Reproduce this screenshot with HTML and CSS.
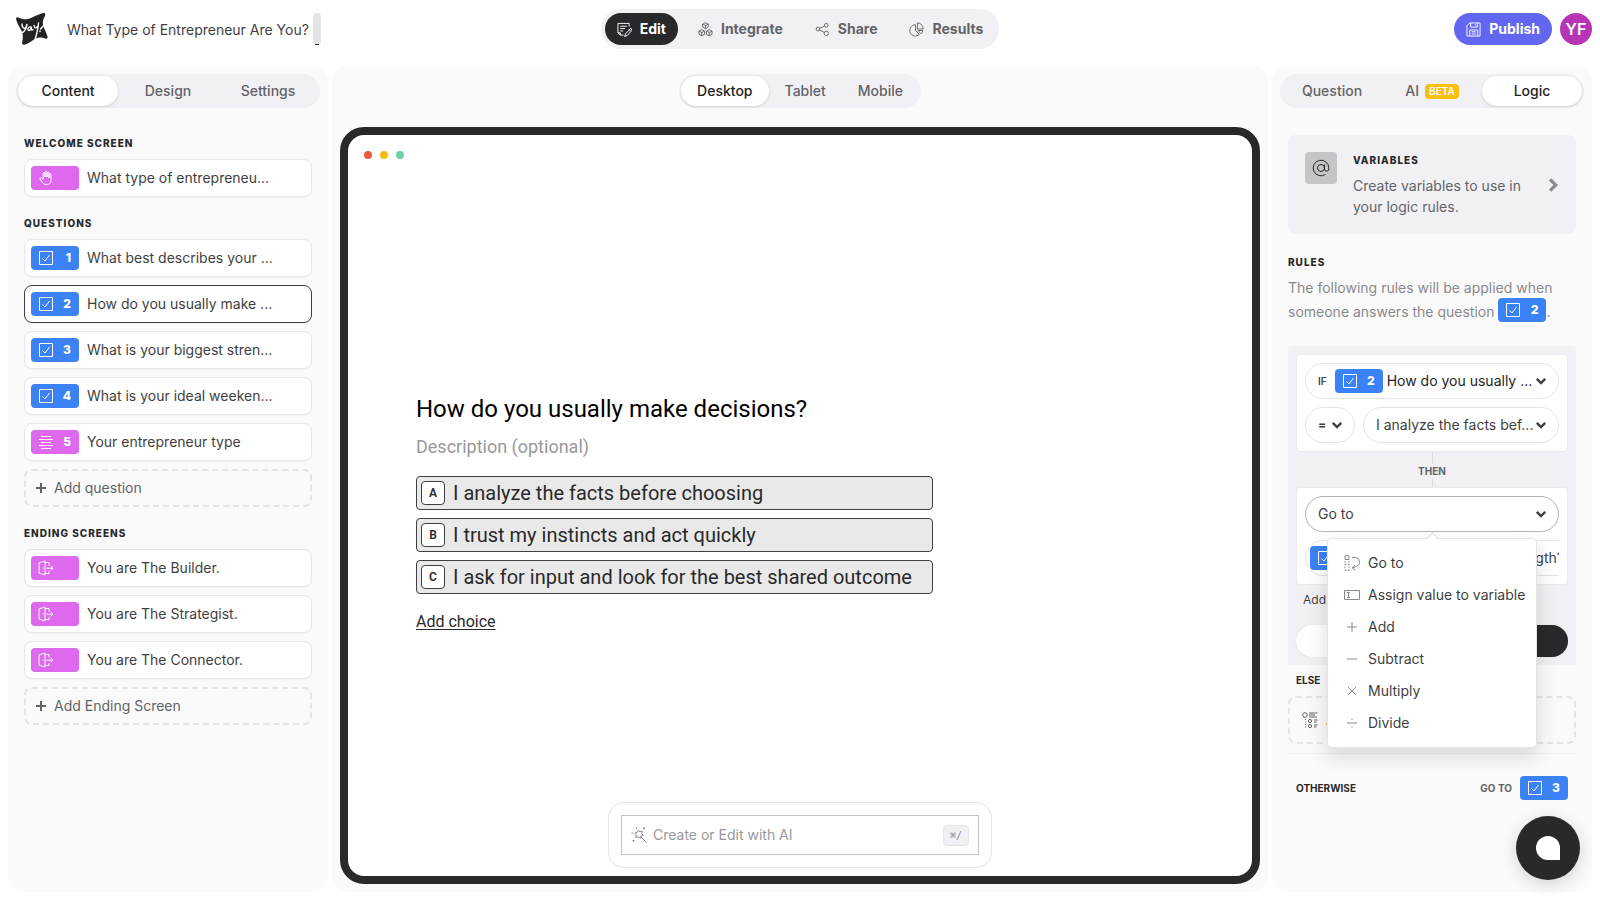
FILE: index.html
```html
<!DOCTYPE html>
<html lang="en">
<head>
    <meta charset="UTF-8">
    <meta name="viewport" content="width=device-width, initial-scale=1.0">
    <title>What Type of Entrepreneur Are You?</title>
    <link rel="stylesheet" href="styles.css">
</head>
<body>
    <svg class="sprite" aria-hidden="true">
        <symbol id="check" viewBox="0 0 16 16"><path d="M1.500 1.500h13v13h-13zM4.500 8.500l2.500 2.500 4.500-6"/></symbol>
        <symbol id="lines" viewBox="0 0 16 16"><path d="M3 2.500h10M1 5.500h14M3 8.500h10M1 11.500h14M3 14.500h10"/></symbol>
        <symbol id="hand" viewBox="0 0 16 16"><path d="M5 9V3.500a1 1 0 0 1 2 0V7M7 7V2.500a1 1 0 0 1 2 0V7M9 7V3a1 1 0 0 1 2 0v5M11 8V4.500a1 1 0 0 1 2 0V10c0 3-1.500 4.500-4.500 4.500-2.500 0-3.500-1-4.500-2.500L2 9c-.5-1 .8-1.800 1.600-1L5 9.500"/></symbol>
        <symbol id="door" viewBox="0 0 16 16"><path d="M1 3l6-2v14l-6-2zM5 7.500v1M7 2.500h4v3M11 11v2.500H7M8.500 8.200H15M12.800 6l2.200 2.200-2.200 2.200"/></symbol>
        <symbol id="edit" viewBox="0 0 16 16"><path d="M13 5V1.500H1v10l2.500 2.500H7M3.500 4.500h7M3.500 7h5M3.500 9.500h3M1 11.500h2.500V14M14.800 6.500l-5.600 6-1.200 3 3-1.200 4.800-5.400zM13 8.300l1.500 1.500"/></symbol>
        <symbol id="cubes" viewBox="0 0 16 16"><path d="M8 .8l3 1.500v3.200L8 7.200 5 5.500V2.300zM5 2.300l3 1.500 3-1.500M8 3.800v3.400M4 8.200l3 1.500v3.400l-3 1.600-3-1.600V9.700zM1 9.700l3 1.500 3-1.500M4 11.200v3.500M12 8.200l3 1.500v3.400l-3 1.600-3-1.600V9.700zM9 9.700l3 1.500 3-1.500M12 11.200v3.500"/></symbol>
        <symbol id="share" viewBox="0 0 16 16"><circle cx="3.200" cy="7.500" r="2"/><circle cx="12" cy="3.500" r="2"/><circle cx="12" cy="12.200" r="2.300"/><path d="M5 6.700l5.200-2.400M5 8.500l5 2.700"/></symbol>
        <symbol id="pie" viewBox="0 0 16 16"><path d="M7 3a6 6 0 1 0 4 10.300L7 9zM9 1v6.500h6A6 6 0 0 0 9 1zM9.500 9h5.300a6 6 0 0 1-1.800 3.600z"/></symbol>
        <symbol id="save" viewBox="0 0 16 16"><path d="M4 1h11v14H1V4zM5 1v4.500h7V1M10 2.500v1.500M4 15V8.500h8.500V15M6 10.500h4.500M6 12.700h4.500"/></symbol>
        <symbol id="at" viewBox="0 0 18 18"><circle cx="9" cy="9" r="3.500"/><path d="M12.500 5.500V10a2 2 0 0 0 4.300 0V9a7.800 7.800 0 1 0-3.300 6.400"/></symbol>
        <symbol id="plus" viewBox="0 0 10 10"><path d="M5 0v10M0 5h10"/></symbol>
        <symbol id="minus" viewBox="0 0 10 10"><path d="M0 5h10"/></symbol>
        <symbol id="times" viewBox="0 0 10 10"><path d="M1 1l8 8M9 1L1 9"/></symbol>
        <symbol id="divide" viewBox="0 0 10 10"><path d="M0 5h10M5 .5v1.500M5 8v1.500"/></symbol>
        <symbol id="chevron" viewBox="0 0 10 10"><path d="M1.500 3.200L5 6.700l3.500-3.500"/></symbol>
        <symbol id="wand" viewBox="0 0 16 16"><path d="M7.500 3.200l1.200 1.600 2.500-.6-.5 2.400 1.600 1.800-2.400.6-.6 2.300-1.900-1.500-2.600.8.5-2.600-1.600-1.800 2.400-.6zM10 10l5.500 5.500M5.500.5v1.500M13 .3v2M12 1.300h2M.5 6H2M2.500 12.700v2M1.500 13.700h2"/></symbol>
        <symbol id="goto" viewBox="0 0 16 16"><path d="M1 .8h4v3.700H1zM8 2.500h3.500a4.500 4.500 0 0 1 1 8.800L8.500 13M11 10l-2.700 3 3 2"/><path stroke-dasharray="1.500 1.300" d="M1 6v9.500M5 6v9.500M1 9.200h4M1 15.300h4"/></symbol>
        <symbol id="assign" viewBox="0 0 16 16"><path d="M.5 3.500h15v9H.5zM3 5.500h3M3 10.500h3M4.500 5.500v5"/></symbol>
        <symbol id="branch" viewBox="0 0 16 16"><circle cx="3" cy="3" r="2.300"/><path d="M7 1h8.500M7 3h6M7 5h8M12 8h3.500M12 10h2.500M12 13h3.500M12 15h2.500M3.500 7v1M3.500 9.500v1M3.500 12v1M3.500 14.500v1"/><circle cx="8" cy="9" r="1.600"/><circle cx="8" cy="14" r="1.600"/></symbol>
    </svg>

    <header class="topbar">
        <div class="brand">
            <a href="#" class="logo" aria-label="Home">
                <svg viewBox="0 0 32 32">
                    <path class="logo-star" d="M2 4.500c4.500 2 9 2.600 13 .6C19 3.300 23 1 27.500.1c1.600-.2 2.200 1 1.500 2.600-2.600 4.500-2.800 8.300-1 12.300 1.400 3 3 6.500 3.600 9 .2 1.600-1 2-2.400 1.400-3.800-1.600-7.300-1.300-10.800.8-3.500 2.100-6.400 4.700-9.900 5.500-1.700.3-2.700-.6-2.300-2.400 1-4.500.9-8.300-.8-11.800C4 14.500 1.500 11 .3 7-.2 5 .6 4 2 4.500z"/>
                    <path class="logo-ink" d="M6 11c0 4 2 5 4 3.500L11 11c-.5 4-1.500 7-4.500 8.500M15 14c-3-.8-4 3-2 3.500 1.500 0 2-2 2.500-3.500-.5 2 0 4 1.500 2.500M18 12.500c.5 3 2 3 3.500 1M22.500 10c0 4-1 8-3.500 17M31 9l-6.500 7M24 18v.5"/>
                </svg>
            </a>
            <input class="form-name" type="text" value="What Type of Entrepreneur Are You?" aria-label="Form name">
            <span class="form-handle"></span>
        </div>
        <nav class="main-nav">
            <a href="#" class="active"><svg class="icon"><use href="#edit"/></svg>Edit</a>
            <a href="#"><svg class="icon"><use href="#cubes"/></svg>Integrate</a>
            <a href="#"><svg class="icon"><use href="#share"/></svg>Share</a>
            <a href="#"><svg class="icon"><use href="#pie"/></svg>Results</a>
        </nav>
        <div class="account">
            <button type="button" class="publish"><svg class="icon"><use href="#save"/></svg>Publish</button>
            <button type="button" class="avatar">YF</button>
        </div>
    </header>

    <div class="workspace">
        <aside class="panel">
            <div class="tabs">
                <button type="button" class="active">Content</button>
                <button type="button">Design</button>
                <button type="button">Settings</button>
            </div>
            <div class="panel-body">
                <section class="group">
                    <h2>Welcome screen</h2>
                    <a href="#" class="card"><span class="chip pink"><svg class="icon"><use href="#hand"/></svg></span><span>What type of entrepreneu...</span></a>
                </section>
                <section class="group">
                    <h2>Questions</h2>
                    <a href="#" class="card"><span class="chip"><svg class="icon"><use href="#check"/></svg>1</span><span>What best describes your ...</span></a>
                    <a href="#" class="card selected"><span class="chip"><svg class="icon"><use href="#check"/></svg>2</span><span>How do you usually make ...</span></a>
                    <a href="#" class="card"><span class="chip"><svg class="icon"><use href="#check"/></svg>3</span><span>What is your biggest stren...</span></a>
                    <a href="#" class="card"><span class="chip"><svg class="icon"><use href="#check"/></svg>4</span><span>What is your ideal weeken...</span></a>
                    <a href="#" class="card"><span class="chip pink"><svg class="icon"><use href="#lines"/></svg>5</span><span>Your entrepreneur type</span></a>
                    <button type="button" class="add"><svg class="icon"><use href="#plus"/></svg>Add question</button>
                </section>
                <section class="group">
                    <h2>Ending screens</h2>
                    <a href="#" class="card"><span class="chip pink"><svg class="icon"><use href="#door"/></svg></span><span>You are The Builder.</span></a>
                    <a href="#" class="card"><span class="chip pink"><svg class="icon"><use href="#door"/></svg></span><span>You are The Strategist.</span></a>
                    <a href="#" class="card"><span class="chip pink"><svg class="icon"><use href="#door"/></svg></span><span>You are The Connector.</span></a>
                    <button type="button" class="add"><svg class="icon"><use href="#plus"/></svg>Add Ending Screen</button>
                </section>
            </div>
        </aside>

        <main class="panel preview">
            <div class="tabs devices">
                <button type="button" class="active">Desktop</button>
                <button type="button">Tablet</button>
                <button type="button">Mobile</button>
            </div>
            <div class="browser">
                <div class="dots"><span class="dot red"></span><span class="dot yellow"></span><span class="dot green"></span></div>
                <div class="stage">
                    <div class="question">
                        <h1>How do you usually make decisions?</h1>
                        <input class="description" type="text" placeholder="Description (optional)" aria-label="Description">
                        <ul class="choices">
                            <li><kbd>A</kbd>I analyze the facts before choosing</li>
                            <li><kbd>B</kbd>I trust my instincts and act quickly</li>
                            <li><kbd>C</kbd>I ask for input and look for the best shared outcome</li>
                        </ul>
                        <a href="#" class="add-choice">Add choice</a>
                    </div>
                </div>
                <div class="ai-bar">
                    <label class="ai-field">
                        <svg class="icon"><use href="#wand"/></svg>
                        <input type="text" placeholder="Create or Edit with AI" aria-label="Create or Edit with AI">
                        <kbd>⌘/</kbd>
                    </label>
                </div>
            </div>
        </main>

        <aside class="panel">
            <div class="tabs">
                <button type="button">Question</button>
                <button type="button">AI<span class="beta">BETA</span></button>
                <button type="button" class="active">Logic</button>
            </div>
            <div class="panel-body logic">
                <a href="#" class="variables">
                    <span class="variables-icon"><svg class="icon"><use href="#at"/></svg></span>
                    <span class="variables-text">
                        <strong>Variables</strong>
                        <span>Create variables to use in your logic rules.</span>
                    </span>
                    <svg class="icon variables-arrow"><use href="#chevron"/></svg>
                </a>
                <h2>Rules</h2>
                <p class="intro">The following rules will be applied when someone answers the question <span class="chip"><svg class="icon"><use href="#check"/></svg>2</span>.</p>

                <div class="rule">
                    <div class="rule-card">
                        <label class="pill">
                            <span class="if">IF</span>
                            <span class="chip"><svg class="icon"><use href="#check"/></svg>2</span>
                            <select class="dark" aria-label="Question"><option>How do you usually ...</option></select>
                            <svg class="icon arrow"><use href="#chevron"/></svg>
                        </label>
                        <div class="pill-row">
                            <label class="pill operator">
                                <select aria-label="Operator"><option>=</option></select>
                                <svg class="icon arrow"><use href="#chevron"/></svg>
                            </label>
                            <label class="pill">
                                <select aria-label="Answer"><option>I analyze the facts bef...</option></select>
                                <svg class="icon arrow"><use href="#chevron"/></svg>
                            </label>
                        </div>
                    </div>
                    <div class="then"><span>THEN</span></div>
                    <div class="rule-card">
                        <div class="action">
                            <button type="button" class="pill open" aria-expanded="true">Go to<svg class="icon arrow"><use href="#chevron"/></svg></button>
                            <div class="menu" role="menu">
                                <button type="button" role="menuitem"><svg class="icon"><use href="#goto"/></svg>Go to</button>
                                <button type="button" role="menuitem"><svg class="icon"><use href="#assign"/></svg>Assign value to variable</button>
                                <button type="button" role="menuitem"><svg class="icon small"><use href="#plus"/></svg>Add</button>
                                <button type="button" role="menuitem"><svg class="icon small"><use href="#minus"/></svg>Subtract</button>
                                <button type="button" role="menuitem"><svg class="icon small"><use href="#times"/></svg>Multiply</button>
                                <button type="button" role="menuitem"><svg class="icon small"><use href="#divide"/></svg>Divide</button>
                            </div>
                        </div>
                        <div class="target-clip">
                            <button type="button" class="pill target"><span class="chip"><svg class="icon"><use href="#check"/></svg>3</span>What is your biggest strength?</button>
                        </div>
                    </div>
                    <a href="#" class="add-action">Add</a>
                    <div class="rule-buttons">
                        <button type="button" class="cancel" aria-label="Cancel"></button>
                        <button type="button" class="confirm" aria-label="Save"></button>
                    </div>
                </div>

                <h3>ELSE</h3>
                <button type="button" class="add else"><svg class="icon"><use href="#branch"/></svg>Add</button>
                <hr>
                <div class="otherwise">
                    <h3>OTHERWISE</h3>
                    <span class="goto">GO TO</span>
                    <span class="chip"><svg class="icon"><use href="#check"/></svg>3</span>
                </div>
            </div>
        </aside>
    </div>

    <button type="button" class="chat" aria-label="Chat"><span></span></button>
</body>
</html>
```

FILE: styles.css
```css
* {
    box-sizing: border-box;
}
body {
    margin: 0;
    min-height: 100vh;
    display: flex;
    flex-direction: column;
    background: #fff;
    color: #3f3f42;
    font-family: Inter, "Liberation Sans", sans-serif;
    font-size: 14px;
    line-height: 20px;
}
button, input, select {
    font: inherit;
    color: inherit;
    border: 0;
    padding: 0;
    background: none;
    outline: 0;
}
a {
    color: inherit;
    text-decoration: none;
}
h1, h2, h3, p, ul {
    margin: 0;
    padding: 0;
}
.sprite {
    display: none;
}
.icon {
    width: 16px;
    height: 16px;
    flex: none;
    fill: none;
    stroke: currentColor;
    stroke-width: 1;
}

/* top bar */
.topbar {
    display: grid;
    grid-template-columns: 1fr auto 1fr;
    align-items: center;
    height: 58px;
    margin-bottom: 8px;
    padding: 0 8px;
}
.brand {
    display: flex;
    align-items: center;
    padding-left: 8px;
}
.logo, .logo svg {
    display: block;
    width: 32px;
    height: 32px;
}
.logo-star {
    fill: #232325;
}
.logo-ink {
    fill: none;
    stroke: #fff;
    stroke-width: 1.4;
    stroke-linecap: round;
}
.form-name {
    width: 246px;
    margin-left: 19px;
    height: 32px;
}
.form-handle {
    display: flex;
    align-items: flex-end;
    justify-content: center;
    width: 8px;
    height: 32px;
    border-radius: 4px;
    background: #e4e4e7;
}
.form-handle::after {
    content: "";
    width: 4px;
    height: 1px;
    background: #29292b;
}
.main-nav {
    display: flex;
    gap: 8px;
    padding: 4px;
    border-radius: 20px;
    background: #f1f1f5;
    font-weight: 700;
    color: #636367;
}
.main-nav a {
    display: flex;
    align-items: center;
    gap: 8px;
    height: 32px;
    padding: 0 12px;
    border-radius: 16px;
}
.main-nav .icon, .publish .icon {
    width: 15px;
    height: 15px;
}
.main-nav .active {
    background: #29292b;
    color: #fff;
}
.account {
    display: flex;
    justify-content: flex-end;
    gap: 8px;
}
.publish, .avatar {
    height: 32px;
    border-radius: 16px;
    color: #fff;
}
.publish {
    display: flex;
    align-items: center;
    gap: 8px;
    padding: 0 12px;
    background: #6366f1;
    font-weight: 700;
}
.avatar {
    width: 32px;
    background: #b735b5;
    font-size: 16px;
    font-weight: 600;
}

/* columns */
.workspace {
    flex: 1;
    display: grid;
    grid-template-columns: 320px 1fr 320px;
    gap: 4px;
    padding: 0 8px 8px;
}
.panel {
    padding: 8px;
    border-radius: 16px;
    background: #fafafa;
}
.panel-body {
    padding: 27px 8px 0;
}
.tabs {
    display: grid;
    grid-template-columns: repeat(3, 1fr);
    padding: 2px;
    border-radius: 17px;
    background: #f1f1f5;
    font-weight: 500;
    color: #636367;
}
.tabs button {
    display: flex;
    align-items: center;
    justify-content: center;
    height: 30px;
    border-radius: 15px;
}
.tabs .active {
    background: #fff;
    color: #232325;
    box-shadow: 0 1px 3px rgba(0, 0, 0, 0.15);
}
.beta {
    margin-left: 6px;
    padding: 0 4px;
    border-radius: 4px;
    background: #fbbf0c;
    color: #fff;
    font-size: 10px;
    line-height: 15px;
    font-weight: 600;
}
h2, h3, .variables strong {
    color: #29292b;
    font-size: 10px;
    line-height: 16px;
    font-weight: 700;
}
h2, .variables strong {
    font-weight: 800;
    letter-spacing: 1px;
    text-transform: uppercase;
}

/* question list */
.group {
    display: flex;
    flex-direction: column;
    gap: 8px;
    margin-bottom: 18px;
}
.card {
    display: flex;
    align-items: center;
    gap: 8px;
    height: 38px;
    padding: 0 6px;
    border: 1px solid #e7e7ea;
    border-radius: 8px;
    background: #fff;
    box-shadow: 0 1px 2px rgba(0, 0, 0, 0.04);
    white-space: nowrap;
}
.card.selected {
    border-color: #3f3f42;
}
.chip {
    display: inline-flex;
    align-items: center;
    justify-content: space-between;
    flex: none;
    width: 48px;
    height: 24px;
    padding: 0 8px 0 7px;
    border-radius: 4px;
    background: #3b82f6;
    color: #fff;
    font-size: 12px;
    font-weight: 800;
}
.chip.pink {
    background: #de69ee;
}
.add {
    display: flex;
    align-items: center;
    gap: 8px;
    height: 38px;
    padding: 0 10px;
    border: 2px dashed #e4e4e7;
    border-radius: 8px;
    color: #636367;
}
.add .icon {
    width: 10px;
    height: 10px;
    stroke-width: 2;
}

/* preview */
.preview {
    display: flex;
    flex-direction: column;
    align-items: center;
}
.devices {
    display: flex;
}
.devices button {
    padding: 0 16px;
}
.browser {
    position: relative;
    flex: 1;
    align-self: stretch;
    display: flex;
    flex-direction: column;
    margin-top: 19px;
    border: 8px solid #29292b;
    border-radius: 24px;
    background: #fff;
}
.dots {
    display: flex;
    gap: 8px;
    padding: 16px;
}
.dot {
    width: 8px;
    height: 8px;
    border-radius: 50%;
}
.red {
    background: #ee583f;
}
.yellow {
    background: #f8bd08;
}
.green {
    background: #6cd2a2;
}
.stage {
    flex: 1;
    display: flex;
    align-items: center;
    padding: 0 68px 25px;
}
.question {
    flex: 0 1 517px;
    font-family: Roboto, "Liberation Sans", sans-serif;
    color: #29292b;
}
.question h1 {
    color: #000;
    font-size: 24px;
    line-height: 32px;
    font-weight: 400;
}
.description {
    display: block;
    width: 100%;
    height: 24px;
    margin: 10px 0 17px;
    font-size: 18px;
}
.description::placeholder, .ai-field input::placeholder {
    color: #98989b;
    opacity: 1;
}
.choices {
    display: grid;
    gap: 8px;
    list-style: none;
}
.choices li {
    display: flex;
    align-items: center;
    gap: 8px;
    height: 34px;
    padding: 0 4px;
    border: 1px solid #3f3f42;
    border-radius: 4px;
    background: #e9e9e9;
    font-size: 20px;
}
.choices kbd {
    width: 24px;
    border: 1px solid #3f3f42;
    border-radius: 4px;
    background: #fff;
    font: 600 12px/22px Roboto, sans-serif;
    text-align: center;
}
.add-choice {
    display: inline-block;
    margin-top: 16px;
    font-size: 16px;
    line-height: 24px;
    text-decoration: underline;
    text-underline-offset: 2px;
}
.ai-bar {
    position: absolute;
    left: 50%;
    bottom: 8px;
    width: 384px;
    transform: translateX(-50%);
    padding: 12px;
    border: 1px solid #e4e4e7;
    border-radius: 16px;
    background: #fff;
}
.ai-field {
    display: flex;
    align-items: center;
    gap: 6px;
    height: 40px;
    padding: 0 9px;
    border: 1px solid #c4c4c7;
    color: #8a8a8e;
}
.ai-field input {
    flex: 1;
    min-width: 0;
}
.ai-field kbd {
    width: 26px;
    border: 1px solid #e4e4e7;
    border-radius: 4px;
    background: #f1f1f5;
    font: 10px/19px "DejaVu Sans Mono", monospace;
    text-align: center;
}

/* logic */
.variables {
    display: flex;
    gap: 16px;
    margin-bottom: 20px;
    padding: 17px;
    border-radius: 8px;
    background: #f1f1f5;
    color: #636367;
}
.variables-icon {
    display: flex;
    align-items: center;
    justify-content: center;
    flex: none;
    width: 32px;
    height: 32px;
    border-radius: 4px;
    background: #c4c4c9;
    color: #29292b;
}
.variables-icon .icon {
    width: 18px;
    height: 18px;
}
.variables-text {
    flex: 1;
    display: grid;
    gap: 7px;
    line-height: 21px;
}
.variables-arrow {
    align-self: center;
    margin-right: -2px;
    transform: rotate(-90deg);
    stroke-width: 2;
    color: #8a8a8e;
}
.intro {
    margin: 6px 0 22px;
    color: #8a8a8e;
    line-height: 24px;
}
.intro .chip {
    vertical-align: middle;
    margin-top: -6px;
}
.rule {
    padding: 8px;
    border-radius: 4px;
    background: #f1f1f5;
}
.rule-card {
    display: grid;
    grid-template-columns: minmax(0, 1fr);
    gap: 8px;
    padding: 8px;
    border: 1px solid #ebebee;
    border-radius: 4px;
    background: #fff;
}
.pill-row {
    display: flex;
    gap: 8px;
}
.pill {
    display: flex;
    align-items: center;
    flex: 1;
    min-width: 0;
    height: 36px;
    padding: 0 11px 0 12px;
    border: 1px solid #e4e4e7;
    border-radius: 18px;
    background: #fff;
}
.pill select {
    flex: 1;
    min-width: 0;
    appearance: none;
    white-space: nowrap;
}
.pill .dark {
    color: #232325;
}
.pill .if {
    margin-right: 8px;
    font-size: 10px;
    font-weight: 600;
}
.pill .chip {
    margin-right: 4px;
}
.pill .arrow {
    width: 12px;
    height: 12px;
    stroke-width: 2;
}
.pill.operator {
    flex: 0 0 50px;
    font-size: 12px;
    font-weight: 700;
}
.pill.open {
    width: 100%;
    justify-content: space-between;
    border-color: #b4b4b8;
}
.then {
    display: flex;
    flex-direction: column;
    align-items: center;
    color: #636367;
    font-size: 10px;
    line-height: 12px;
    font-weight: 700;
}
.then::before, .then::after {
    content: "";
    width: 1px;
    height: 12px;
    background: #dcdce0;
}
.then::after {
    height: 9px;
}
.then span {
    padding: 1px 0;
}
.action {
    position: relative;
}
.menu {
    position: absolute;
    z-index: 2;
    top: 42px;
    left: 50%;
    width: 210px;
    transform: translateX(-50%);
    padding: 8px 0;
    border: 1px solid #e4e4e7;
    border-radius: 4px;
    background: #fff;
    box-shadow: 0 8px 20px rgba(0, 0, 0, 0.14);
}
.menu::before {
    content: "";
    position: absolute;
    top: -5px;
    left: 50%;
    width: 8px;
    height: 8px;
    margin-left: -4px;
    transform: rotate(45deg);
    border: 1px solid #dcdce0;
    border-right: 0;
    border-bottom: 0;
    background: #fff;
}
.menu button {
    display: flex;
    align-items: center;
    gap: 8px;
    width: 100%;
    height: 32px;
    padding-left: 16px;
    white-space: nowrap;
}
.menu .icon {
    color: #8a8a8e;
}
.menu .small {
    width: 10px;
    height: 10px;
    margin: 0 3px;
}
.target-clip {
    overflow: hidden;
}
.target {
    width: 272px;
    padding: 0 4px;
    white-space: nowrap;
}
.add-action {
    display: block;
    padding: 5px 7px 15px;
    font-size: 12px;
}
.rule-buttons {
    display: grid;
    grid-template-columns: 1fr 1fr;
    gap: 8px;
}
.rule-buttons button {
    height: 32px;
    border-radius: 16px;
    background: #fff;
    box-shadow: 0 0 1px #c4c4c7;
}
.rule-buttons .confirm {
    background: #29292b;
}
.logic h3 {
    margin: 7px 8px 8px;
}
.else {
    width: 100%;
    height: 48px;
    padding: 0 12px;
}
.add.else .icon {
    width: 16px;
    height: 16px;
    stroke-width: 1;
}
hr {
    margin: 9px 0 22px;
    border: 0;
    border-top: 1px solid #efeff2;
}
.otherwise {
    display: flex;
    align-items: center;
    gap: 8px;
    padding: 0 8px;
}
.logic .otherwise h3 {
    flex: 1;
    margin: 0;
}
.goto {
    color: #636367;
    font-size: 10px;
    font-weight: 700;
}

/* chat launcher floats over the page */
.chat {
    position: fixed;
    right: 20px;
    bottom: 20px;
    display: flex;
    align-items: center;
    justify-content: center;
    width: 64px;
    height: 64px;
    border-radius: 50%;
    background: #29292b;
    box-shadow: 0 4px 16px rgba(0, 0, 0, 0.16);
}
.chat span {
    width: 24px;
    height: 24px;
    border-radius: 12px 12px 0 12px;
    background: #fff;
}
```
